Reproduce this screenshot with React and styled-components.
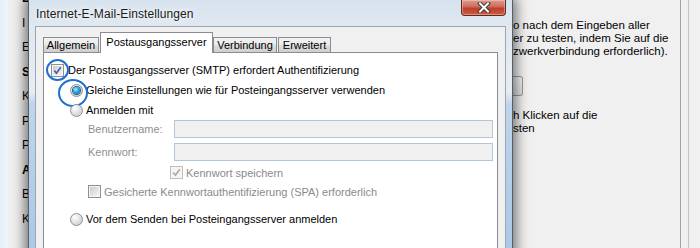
import styled, { createGlobalStyle } from 'styled-components';

const Global = createGlobalStyle`
  html, body { margin: 0; padding: 0; }
  body { width: 700px; height: 248px; overflow: hidden; background: #f0f0f0; }
`;

const Desktop = styled.div`
  position: relative;
  width: 700px;
  height: 248px;
  overflow: hidden;
  display: flex;
  background: #f0f0f0;
  font-family: "Liberation Sans", Arial, sans-serif;
  font-size: 11px;
  color: #000;
`;

/* window behind the dialog */
const ParentGlass = styled.div`
  width: 8px;
  flex: 0 0 8px;
  background: linear-gradient(to right, #e3eff8, #eef5fa);
`;

const ParentClient = styled.div`
  flex: 1;
  display: flex;
  padding-left: 14px;
  background: #f0f0f0;
`;

/* only the first letters peek out left of the dialog */
const LabelColumn = styled.div`
  flex: 0 0 6px;
  min-width: 0;
  margin-top: -14px;
  display: flex;
  flex-direction: column;
`;

const Label = styled.div`
  height: 24.5px;
  line-height: 24.5px;
  font-size: 12px;
  font-weight: ${p => (p.$bold ? 700 : 400)};
  white-space: nowrap;
`;

const InfoColumn = styled.div`
  flex: 0 0 167px;
  margin-left: 485px;
  border-right: 1px solid #a3a3a3;
  padding-top: 19px;
  overflow: hidden;
`;

const InfoText = styled.p`
  margin: 0;
  font-size: 11.5px;
  line-height: 13px;
  white-space: nowrap;
`;

const InfoButton = styled.div`
  width: 10px;
  height: 20px;
  margin: 18px 0 13px 0;
  box-sizing: border-box;
  border: 1px solid #9a9a9a;
  border-left: none;
  border-radius: 0 3px 3px 0;
  background: linear-gradient(to bottom, #f4f4f4, #e2e2e2);
`;

const RightEdge = styled.div`
  flex: 0 0 7px;
  border-right: 1px solid #c4c4c4;
`;

/* dialog window */
const Dialog = styled.div`
  position: absolute;
  left: 28px;
  top: 0;
  width: 485px;
  height: 262px;
  box-sizing: border-box;
  border: 1px solid #54606c;
  border-top: none;
  background: linear-gradient(
    to bottom,
    #d6e2ee 0px,
    #e0e8f0 26px,
    #e8edf2 92px,
    #bfd5eb 104px,
    #abc8e6 248px
  );
  box-shadow: 0 0 12px 3px rgba(0, 0, 0, 0.55);
  display: flex;
  flex-direction: column;
`;

const TitleBar = styled.div`
  height: 26px;
  display: flex;
  align-items: flex-start;
  justify-content: space-between;
  padding: 0 6px 0 7px;
`;

const Title = styled.div`
  font-size: 12px;
  line-height: 12px;
  margin-top: 8px;
  letter-spacing: 0.1px;
  color: #1a1a1a;
  text-shadow: 0 0 6px #fff, 0 0 10px #fff;
  white-space: nowrap;
`;

const CloseButton = styled.div`
  width: 45px;
  height: 16px;
  box-sizing: border-box;
  border: 1px solid #5b2a22;
  border-top: none;
  border-radius: 0 0 4px 4px;
  background: linear-gradient(to bottom, #dd9c90 0%, #cd6b5a 45%, #bd3f2a 55%, #cf5a3f 100%);
  display: flex;
  align-items: center;
  justify-content: center;
  box-shadow: inset 0 0 0 1px rgba(255, 210, 200, 0.45);
`;

const Client = styled.div`
  flex: 1;
  margin: 0 6px;
  box-sizing: border-box;
  border: 1px solid #9aa6b2;
  border-bottom: none;
  background: #f0f0f0;
  padding: 6px 7px 0 7px;
  display: flex;
  flex-direction: column;
`;

const TabStrip = styled.div`
  display: flex;
  align-items: flex-end;
  height: 20px;
  margin-bottom: -1px;
  position: relative;
  z-index: 1;
`;

const Tab = styled.div`
  width: ${p => p.$w}px;
  height: ${p => (p.$active ? '21px' : '16px')};
  box-sizing: border-box;
  padding-top: ${p => (p.$active ? 3 : 1)}px;
  margin-right: ${p => (p.$active ? 0 : 1)}px;
  border: 1px solid #898c95;
  border-bottom: ${p => (p.$active ? 'none' : '1px solid #898c95')};
  background: ${p =>
    p.$active
      ? '#fff'
      : 'linear-gradient(to bottom, #f2f2f2 0%, #ebebeb 50%, #dddddd 51%, #cfcfcf 100%)'};
  text-align: center;
  line-height: 13px;
  white-space: nowrap;
`;

const Panel = styled.div`
  flex: 1;
  border: 1px solid #898c95;
  border-bottom: none;
  background: #fff;
  padding: 7px 0 0 7px;
  display: flex;
  flex-direction: column;
`;

const Row = styled.div`
  display: flex;
  align-items: center;
  gap: ${p => p.$gap || 4}px;
  height: ${p => p.$h || 20}px;
  margin-top: ${p => p.$mt || 0}px;
  padding-left: ${p => p.$indent || 0}px;
  color: ${p => (p.$disabled ? '#8a8a8a' : '#000')};
  white-space: nowrap;
`;

const FieldLabel = styled.span`
  width: 82px;
  flex: 0 0 82px;
  color: #8f8f8f;
`;

const Field = styled.div`
  width: 319px;
  height: 18px;
  box-sizing: border-box;
  border: 1px solid #b2c5d9;
  background: #f0f0f0;
`;

const Control = styled.span`
  position: relative;
  display: inline-flex;
  width: 13px;
  height: 13px;
  flex: 0 0 13px;
`;

const Box = styled.span`
  width: 13px;
  height: 13px;
  box-sizing: border-box;
  border: 1px solid ${p => (p.$disabled ? '#bcbcbc' : '#8e8f8f')};
  box-shadow: inset 0 0 0 1px #f6f6f6;
  background: ${p =>
    p.$disabled
      ? '#f4f4f4'
      : 'linear-gradient(135deg, #c3c7cf 0%, #dfe2e7 50%, #f6f6f7 100%)'};
  display: flex;
  align-items: center;
  justify-content: center;
`;

const Radio = styled.span`
  width: 13px;
  height: 13px;
  box-sizing: border-box;
  border-radius: 50%;
  border: 1px solid #909090;
  background: radial-gradient(circle at 35% 30%, #ffffff 0%, #e4e4e4 45%, #c4c4c4 100%);
  display: flex;
  align-items: center;
  justify-content: center;
`;

const Dot = styled.span`
  width: 7px;
  height: 7px;
  border-radius: 50%;
  background: radial-gradient(circle at 40% 35%, #b8ecff 0%, #2aa4e0 45%, #0b5d98 100%);
  box-shadow: 0 0 0 1px #1d5d8c;
`;

const Ring = styled.span`
  position: absolute;
  left: ${p => p.$x}px;
  top: ${p => p.$y}px;
  width: ${p => p.$w}px;
  height: ${p => p.$h}px;
  box-sizing: border-box;
  border: 2.5px solid #1d6fd1;
  border-radius: 50%;
  pointer-events: none;
`;

const CheckMark = ({ color }) => (
  <svg width="9" height="9" viewBox="0 0 9 9">
    <path d="M1.3 4.6 L3.4 7.2 L7.8 1.2" fill="none" stroke={color} strokeWidth="1.6" />
  </svg>
);

const CloseGlyph = () => (
  <svg width="14" height="11" viewBox="0 0 14 11">
    <path d="M3 1.5 L11 9.5 M11 1.5 L3 9.5" stroke="#3b3b3b" strokeWidth="4" strokeLinecap="square" />
    <path d="M3 1.5 L11 9.5 M11 1.5 L3 9.5" stroke="#fff" strokeWidth="2" strokeLinecap="square" />
  </svg>
);

// visible first letters of the parent window's labels
const labels = [
  ['B', true],
  ['I', false],
  ['E', false],
  ['S', true],
  ['K', false],
  ['P', false],
  ['P', false],
  ['A', true],
  ['B', false],
  ['K', false],
];

const tabs = [
  ['Allgemein', 56, false],
  ['Postausgangsserver', 113, true],
  ['Verbindung', 64, false],
  ['Erweitert', 53, false],
];

export default function App() {
  return (
    <Desktop>
      <Global />
      <ParentGlass />
      <ParentClient>
        <LabelColumn>
          {labels.map(([text, bold], i) => (
            <Label key={i} $bold={bold}>{text}</Label>
          ))}
        </LabelColumn>
        <InfoColumn>
          <InfoText>
            o nach dem Eingeben aller
            <br />
            er zu testen, indem Sie auf die
            <br />
            zwerkverbindung erforderlich).
          </InfoText>
          <InfoButton />
          <InfoText>
            h Klicken auf die
            <br />
            sten
          </InfoText>
        </InfoColumn>
        <RightEdge />
      </ParentClient>

      <Dialog>
        <TitleBar>
          <Title>Internet-E-Mail-Einstellungen</Title>
          <CloseButton>
            <CloseGlyph />
          </CloseButton>
        </TitleBar>
        <Client>
          <TabStrip>
            {tabs.map(([text, w, active]) => (
              <Tab key={text} $w={w} $active={active}>{text}</Tab>
            ))}
          </TabStrip>
          <Panel>
            <Row>
              <Control>
                <Box>
                  <CheckMark color="#4a5d93" />
                </Box>
                <Ring $x={-5} $y={-5} $w={23} $h={22} />
              </Control>
              Der Postausgangsserver (SMTP) erfordert Authentifizierung
            </Row>
            <Row $indent={19} $gap={3}>
              <Control>
                <Radio>
                  <Dot />
                </Radio>
                <Ring $x={-12} $y={-5} $w={30} $h={28} />
              </Control>
              Gleiche Einstellungen wie für Posteingangsserver verwenden
            </Row>
            <Row $indent={19} $gap={3}>
              <Control>
                <Radio />
              </Control>
              Anmelden mit
            </Row>
            <Row $indent={37} $h={18} $gap={0}>
              <FieldLabel>Benutzername:</FieldLabel>
              <Field />
            </Row>
            <Row $indent={37} $h={18} $mt={5} $gap={0}>
              <FieldLabel>Kennwort:</FieldLabel>
              <Field />
            </Row>
            <Row $indent={119} $h={19} $mt={2} $gap={3} $disabled>
              <Control>
                <Box $disabled>
                  <CheckMark color="#a8a8a8" />
                </Box>
              </Control>
              Kennwort speichern
            </Row>
            <Row $indent={37} $h={19} $gap={3} $disabled>
              <Control>
                <Box />
              </Control>
              Gesicherte Kennwortauthentifizierung (SPA) erforderlich
            </Row>
            <Row $indent={19} $mt={8} $gap={3}>
              <Control>
                <Radio />
              </Control>
              Vor dem Senden bei Posteingangsserver anmelden
            </Row>
          </Panel>
        </Client>
      </Dialog>
    </Desktop>
  );
}
